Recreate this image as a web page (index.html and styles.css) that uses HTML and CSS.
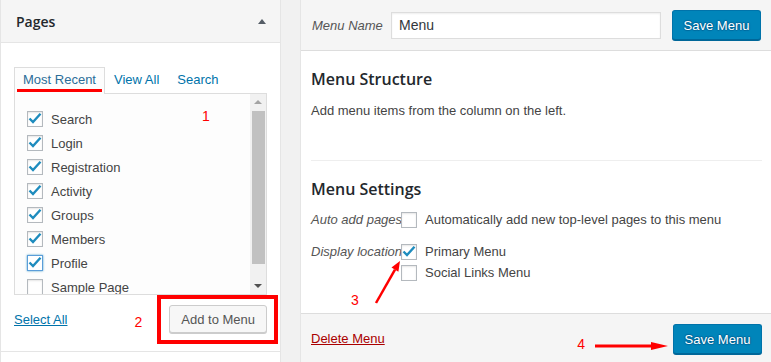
FILE: index.html
```html
<!DOCTYPE html>
<html>
<head>
    <meta charset="UTF-8">
    <meta name="viewport" content="width=device-width, initial-scale=1.0">
    <title>Menus</title>
    <link rel="stylesheet" href="styles.css">
</head>
<body>
    <div class="wrap">
        <!-- Left column: add items -->
        <div class="sidebar">
            <div class="acc-section">
                <div class="acc-title">
                    <h3>Pages</h3>
                    <span class="arrow-up"></span>
                </div>
                <div class="acc-body">
                    <ul class="tabs">
                        <li class="tab active"><span class="tab-text">Most Recent</span></li>
                        <li class="tab"><span class="tab-text">View All</span></li>
                        <li class="tab"><span class="tab-text">Search</span></li>
                    </ul>
                    <div class="tab-panel">
                        <ul class="checklist">
                            <li><span class="cb"><svg class="tick" viewBox="0 0 14 14"><path d="M1.5 6.5 L5 10 L12.5 1.8"/></svg></span>Search</li>
                            <li><span class="cb"><svg class="tick" viewBox="0 0 14 14"><path d="M1.5 6.5 L5 10 L12.5 1.8"/></svg></span>Login</li>
                            <li><span class="cb"><svg class="tick" viewBox="0 0 14 14"><path d="M1.5 6.5 L5 10 L12.5 1.8"/></svg></span>Registration</li>
                            <li><span class="cb"><svg class="tick" viewBox="0 0 14 14"><path d="M1.5 6.5 L5 10 L12.5 1.8"/></svg></span>Activity</li>
                            <li><span class="cb"><svg class="tick" viewBox="0 0 14 14"><path d="M1.5 6.5 L5 10 L12.5 1.8"/></svg></span>Groups</li>
                            <li><span class="cb"><svg class="tick" viewBox="0 0 14 14"><path d="M1.5 6.5 L5 10 L12.5 1.8"/></svg></span>Members</li>
                            <li><span class="cb focus"><svg class="tick" viewBox="0 0 14 14"><path d="M1.5 6.5 L5 10 L12.5 1.8"/></svg></span>Profile</li>
                            <li><span class="cb"></span>Sample Page</li>
                        </ul>
                        <div class="scrollbar">
                            <div class="sb-btn"><span class="sb-up"></span></div>
                            <div class="sb-thumb"></div>
                            <div class="sb-track"></div>
                            <div class="sb-btn"><span class="sb-down"></span></div>
                        </div>
                        <span class="note note-1">1</span>
                    </div>
                    <div class="actions">
                        <a class="link" href="#">Select All</a>
                        <div class="add-group">
                            <span class="note">2</span>
                            <div class="red-box">
                                <button class="btn">Add to Menu</button>
                            </div>
                        </div>
                    </div>
                </div>
            </div>
            <div class="acc-section next"></div>
        </div>

        <div class="spacer"></div>

        <!-- Right column: menu editor -->
        <div class="menu-edit">
            <div class="menu-header">
                <label class="menu-name-label">Menu Name</label>
                <input class="menu-name" type="text" value="Menu">
                <button class="btn-primary">Save Menu</button>
            </div>

            <div class="menu-body">
                <h3>Menu Structure</h3>
                <p>Add menu items from the column on the left.</p>

                <div class="separator"></div>

                <h3>Menu Settings</h3>
                <div class="setting-row">
                    <div class="setting-label">Auto add pages</div>
                    <div class="setting-options">
                        <label class="option"><span class="cb"></span>Automatically add new top-level pages to this menu</label>
                    </div>
                </div>
                <div class="setting-row">
                    <div class="setting-label">Display location</div>
                    <div class="setting-options">
                        <label class="option"><span class="cb"><svg class="tick" viewBox="0 0 14 14"><path d="M1.5 6.5 L5 10 L12.5 1.8"/></svg></span>Primary Menu</label>
                        <label class="option"><span class="cb"></span>Social Links Menu</label>
                    </div>
                </div>

                <!-- annotation 3 -->
                <span class="note note-3">3</span>
                <svg class="arrow-3" viewBox="0 0 35 52" width="35" height="52">
                    <line x1="5" y1="47" x2="24" y2="13.6" stroke="#f00" stroke-width="2.5"/>
                    <polygon points="29,5 27.4,15.7 20.5,11.6" fill="#f00"/>
                </svg>
            </div>

            <div class="menu-footer">
                <a class="delete" href="#">Delete Menu</a>
                <div class="save-group">
                    <span class="note note-4">4</span>
                    <svg class="arrow-4" viewBox="0 0 73 10" width="73" height="10">
                        <line x1="0" y1="5" x2="58" y2="5" stroke="#f00" stroke-width="3"/>
                        <polygon points="56,1 73,5 56,9" fill="#f00"/>
                    </svg>
                    <button class="btn-primary">Save Menu</button>
                </div>
            </div>
        </div>
    </div>
</body>
</html>
```

FILE: styles.css
```css
html {
    background-color: #f1f1f1;
}

body {
    margin: 0;
    font-family: "Liberation Sans", Arial, sans-serif;
    font-size: 13px;
    color: #444;
    overflow: hidden;
    height: 362px;
}

.wrap {
    display: flex;
    height: 362px;
    width: 800px;
}

/* ---------- left column ---------- */

.sidebar {
    width: 281px;
    box-sizing: border-box;
    border-left: 1px solid #e5e5e5;
    border-right: 1px solid #e5e5e5;
    display: flex;
    flex-direction: column;
}

.acc-section {
    background-color: #fff;
    border-bottom: 1px solid #e5e5e5;
}

.acc-section.next {
    flex: 1;
    border-bottom: none;
}

.acc-title {
    height: 42px;
    background-color: #f5f5f5;
    border-bottom: 1px solid #e5e5e5;
    display: flex;
    align-items: center;
    justify-content: space-between;
    padding: 0 14px 0 15px;
}

.acc-title h3 {
    margin: 0;
    font-family: "Open Sans", sans-serif;
    font-weight: 600;
    font-size: 14px;
    color: #23282d;
}

.arrow-up {
    width: 0;
    height: 0;
    border-left: 4px solid transparent;
    border-right: 4px solid transparent;
    border-bottom: 5px solid #555d66;
}

.acc-body {
    padding: 24px 13px 7px 13px;
}

.tabs {
    display: flex;
    margin: 0;
    padding: 0;
    list-style: none;
}

.tab {
    border: 1px solid transparent;
    border-bottom: none;
    padding: 3px 2px 1px 2px;
    color: #0073aa;
    position: relative;
}

.tab.active {
    border-color: #ddd;
    background-color: #fdfdfd;
    color: #2b6d99;
    margin-bottom: -1px;
    z-index: 1;
}

.tab-text {
    display: block;
    padding: 0 6px;
    line-height: 18px;
    border-bottom: 3px solid transparent;
}

.tab.active .tab-text {
    border-bottom-color: #f00;
}

.tab-panel {
    position: relative;
    height: 202px;
    box-sizing: border-box;
    border: 1px solid #ddd;
    background-color: #fdfdfd;
    display: flex;
}

.checklist {
    flex: 1;
    margin: 0;
    padding: 13px 0 0 12px;
    list-style: none;
    overflow: hidden;
}

.checklist li {
    height: 24px;
    display: flex;
    align-items: center;
    gap: 8px;
    color: #444;
}

.cb {
    width: 16px;
    height: 16px;
    box-sizing: border-box;
    border: 1px solid #b4b9be;
    background-color: #fff;
    box-shadow: inset 0 1px 2px rgba(0, 0, 0, 0.1);
    flex: none;
    display: flex;
    align-items: center;
    justify-content: center;
}

.cb.focus {
    border-color: #5b9dd9;
    box-shadow: 0 0 2px rgba(30, 140, 190, 0.8);
}

.tick {
    width: 14px;
    height: 14px;
    display: block;
}

.tick path {
    fill: none;
    stroke: #1e8cbe;
    stroke-width: 2.4;
}

.scrollbar {
    width: 16px;
    background-color: #f1f1f1;
    display: flex;
    flex-direction: column;
}

.sb-btn {
    height: 16px;
    display: flex;
    align-items: center;
    justify-content: center;
}

.sb-up {
    border-left: 4px solid transparent;
    border-right: 4px solid transparent;
    border-bottom: 4px solid #a3a3a3;
}

.sb-down {
    border-left: 4px solid transparent;
    border-right: 4px solid transparent;
    border-top: 4px solid #505050;
}

.sb-thumb {
    height: 153px;
    margin: 1px 1px 0 2px;
    background-color: #c1c1c1;
}

.sb-track {
    flex: 1;
}

.note {
    font-family: "Liberation Sans", Arial, sans-serif;
    font-size: 14px;
    line-height: 14px;
    color: #f00;
}

.note-1 {
    position: absolute;
    left: 187px;
    top: 15px;
}

.actions {
    display: flex;
    align-items: center;
    justify-content: space-between;
    margin-right: -11px;
}

.link {
    color: #0073aa;
    text-decoration: underline;
}

.add-group {
    display: flex;
    align-items: center;
    gap: 15px;
}

.add-group .note {
    margin-top: 4px;
}

.red-box {
    border: 4px solid #f00;
    padding: 6px 7px 7px 8px;
}

.btn {
    height: 28px;
    padding: 0 11px;
    font-family: "Liberation Sans", Arial, sans-serif;
    font-size: 13px;
    color: #555;
    background-color: #f7f7f7;
    border: 1px solid #ccc;
    border-radius: 3px;
    box-shadow: 0 1px 0 #ccc;
    display: block;
}

/* ---------- right column ---------- */

.spacer {
    width: 19px;
    flex: none;
}

.menu-edit {
    width: 472px;
    flex: none;
    box-sizing: border-box;
    border-left: 1px solid #e5e5e5;
    background-color: #fff;
    display: flex;
    flex-direction: column;
}

.menu-header {
    background-color: #f5f5f5;
    border-bottom: 1px solid #ddd;
    padding: 10px;
    display: flex;
    align-items: center;
}

.menu-name-label {
    width: 80px;
    padding-left: 1px;
    box-sizing: border-box;
    font-style: italic;
    color: #555;
}

.menu-name {
    width: 270px;
    height: 27px;
    box-sizing: border-box;
    margin: 0 11px 0 0;
    padding: 0 7px;
    border: 1px solid #ddd;
    box-shadow: inset 0 1px 2px rgba(0, 0, 0, 0.07);
    font-family: "Liberation Sans", Arial, sans-serif;
    font-size: 14px;
    color: #32373c;
    background-color: #fff;
}

.btn-primary {
    width: 89px;
    height: 30px;
    padding: 0;
    font-family: "Liberation Sans", Arial, sans-serif;
    font-size: 13px;
    color: #fff;
    background-color: #0085ba;
    border: 1px solid #0073aa;
    border-bottom-color: #006799;
    border-radius: 3px;
    box-shadow: 0 1px 0 #006799;
    text-shadow: 0 -1px 1px #006799, 1px 0 1px #006799, 0 1px 1px #006799, -1px 0 1px #006799;
}

.menu-body {
    position: relative;
    padding: 0 10px 32px 10px;
}

.menu-body h3 {
    margin: 18px 0 13px 0;
    font-family: "Open Sans", sans-serif;
    font-weight: 600;
    font-size: 16px;
    line-height: 20px;
    color: #23282d;
}

.menu-body p {
    margin: 0;
    line-height: 18px;
}

.separator {
    margin-top: 40px;
    border-top: 1px solid #eee;
}

.setting-row {
    display: flex;
    margin-top: 16px;
}

.menu-body h3 + .setting-row {
    margin-top: 13px;
}

.setting-label {
    width: 90px;
    flex: none;
    font-style: italic;
    color: #555;
    line-height: 16px;
    white-space: nowrap;
}

.setting-options {
    display: flex;
    flex-direction: column;
    gap: 5px;
}

.option {
    display: flex;
    align-items: center;
    gap: 8px;
    line-height: 16px;
    color: #444;
}

.note-3 {
    position: absolute;
    left: 50px;
    top: 242px;
}

.arrow-3 {
    position: absolute;
    left: 70px;
    top: 205px;
}

.menu-footer {
    flex: 1;
    background-color: #f5f5f5;
    border-top: 1px solid #ddd;
    padding: 10px;
    display: flex;
    align-items: flex-start;
    justify-content: space-between;
}

.delete {
    color: #a00;
    text-decoration: underline;
    line-height: 30px;
}

.save-group {
    display: flex;
    align-items: center;
}

.note-4 {
    margin: 10px 10px 0 0;
}

.arrow-4 {
    display: block;
    margin: 14px 5px 0 0;
}
```
